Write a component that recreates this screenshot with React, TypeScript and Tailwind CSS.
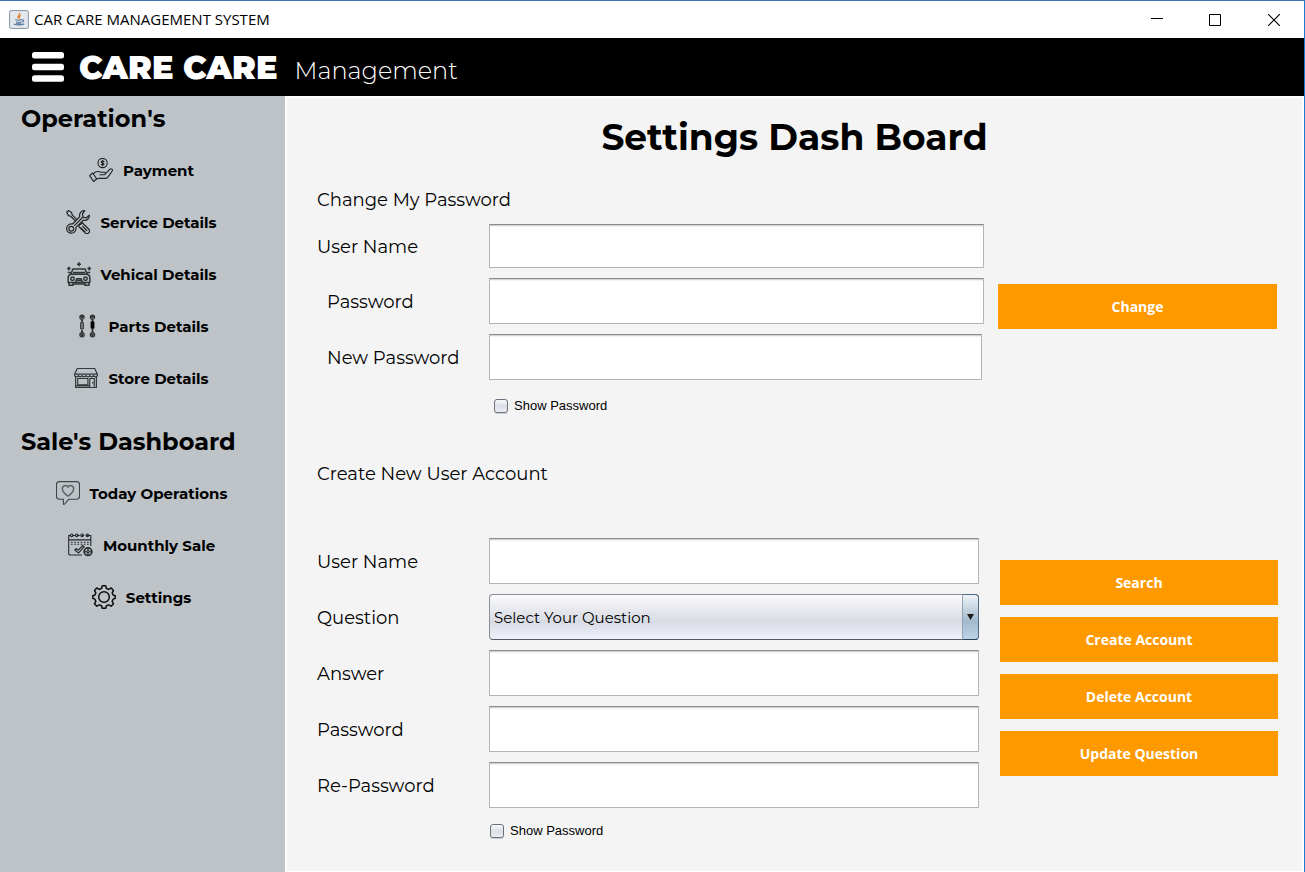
import React, { useState } from "react";

const PaymentIcon = () => (
  <svg width="24" height="24" viewBox="0 0 24 24" fill="none" stroke="#1f2326" strokeWidth="1.100" strokeLinejoin="round" strokeLinecap="round" aria-hidden="true">
    <circle cx="13.600" cy="5" r="4.600" />
    <path d="M15 3.600c-.5-.7-2.800-.7-2.800.4s2.800.8 2.800 2-2.300 1.200-2.900.3M13.600 2.400v5.300" />
    <path d="M.6 17.600l3-2.600 4 5.800-3 2.700z" />
    <path d="M4.300 15.700c2-2 4.300-2.600 6.200-1.900l1.700.5h3c1.800.1 1.700 2.400 0 2.500h-4.400M16.400 15.600l4.400-4.300c1.500-1.200 3.300.2 2.400 1.700l-4.500 6.400c-.6.7-1.300 1-2.200 1H9.200l-1.900.7" />
  </svg>
);

const ServiceIcon = () => (
  <svg width="24" height="24" viewBox="0 0 24 24" fill="none" stroke="#202427" strokeWidth="1.200" strokeLinejoin="round" strokeLinecap="round" aria-hidden="true">
    <path d="M.7 2.200L2.300.6l3.300 2 .6 2.200 4.600 4.800M9.400 10.900L4.700 6.300 2.500 5.600.7 2.200" />
    <path d="M13.300 14.700l1.300-.2 1-1 .2-1.200 7 6.900c2.200 2.500-1.300 6-3.700 3.700l-6.300-6.400zM16.600 16.200l4.200 4.300M15 17.800l4 4" />
    <path d="M18.700.7c-3.500-.4-5.800 2.800-4.900 5.900L6.500 14C2.700 13.300.2 16.500.7 19.400c1 4.500 8.200 5.600 9.300-.4l-.1-1.600 7.500-7.300c3.300.9 6.300-1.600 5.900-5L20.200 8l-3-.8-.8-3.100z" />
    <circle cx="5.300" cy="18.700" r="2.400" />
    <path d="M8.600 15.400l8.200-8.100" />
  </svg>
);

const VehicleIcon = () => (
  <svg width="24" height="24" viewBox="0 0 24 24" fill="none" stroke="#2f3437" strokeWidth="1.500" strokeLinejoin="round" aria-hidden="true">
    <path d="M12 .2v4M10 2.200h4M1.800 4.800v3.600M0 6.600h3.600M22.200 4.800v3.600M20.400 6.600H24" />
    <path d="M3.800 12.300L6 6.900h12l2.200 5.400zM6 10.500h12M.8 10.600h2.800M20.400 10.600h2.800" />
    <path d="M3.800 12.300C2 12.900 1.200 14 1.200 15.500v4.900h21.600v-4.900c0-1.500-.8-2.600-2.600-3.200" />
    <path d="M2 20.400v2.900h4v-2.900M18 20.400v2.900h4v-2.900M8.500 20.300l1.300-3.600h4.400l1.300 3.600M6 22h12M9 18.400h6" />
    <circle cx="5.500" cy="16.700" r="1.700" />
    <circle cx="18.500" cy="16.700" r="1.700" />
  </svg>
);

const PartsIcon = () => (
  <svg width="24" height="24" viewBox="0 0 24 24" fill="none" stroke="#2b2f32" strokeWidth="1.200" aria-hidden="true">
    <circle cx="7" cy="3.200" r="2.100" />
    <circle cx="7" cy="3.200" r=".8" />
    <circle cx="7" cy="20.800" r="2.100" />
    <circle cx="7" cy="20.800" r=".8" />
    <path d="M7 5.500v2.300M7 16.300v2.200" strokeWidth="2" />
    <path d="M5.600 8.500h2.800v6.500H5.600zM5 10h4M5 12h4M5 14h4" strokeWidth=".9" />
    <circle cx="17.500" cy="3.200" r="2.100" />
    <circle cx="17.500" cy="3.200" r=".8" />
    <circle cx="17.500" cy="20.800" r="2.100" />
    <circle cx="17.500" cy="20.800" r=".8" />
    <path d="M17.500 5.500v13" strokeWidth="1.800" />
    <path d="M17.500 7.500v7" stroke="#000" strokeWidth="3.800" />
  </svg>
);

const StoreIcon = () => (
  <svg width="24" height="24" viewBox="0 0 24 24" fill="none" stroke="#34393c" strokeWidth="1.200" strokeLinejoin="round" aria-hidden="true">
    <path d="M3.300 2.500h17.400l2.700 5.700H.6z" />
    <path d="M.6 8.200v1.200c.3 1.900 3.500 1.900 3.800 0 .4 1.900 3.400 1.900 3.800 0 .4 1.900 3.300 1.900 3.800 0 .5 1.900 3.400 1.900 3.800 0 .4 1.900 3.400 1.900 3.800 0 .3 1.900 3.500 1.900 3.800 0V8.200" />
    <path d="M1.600 10.800v10.700h20.800V10.800M3.700 12.500h10.200v6.400H3.700zM15.700 21.500v-9h4.600v9M1.600 19.900h14.100M18.700 16v1.500" />
  </svg>
);

const TodayIcon = () => (
  <svg width="24" height="24" viewBox="0 0 24 24" fill="none" stroke="#414649" strokeWidth="1.100" strokeLinejoin="round" aria-hidden="true">
    <path d="M3.500.6h17c2 0 3 1.200 3 3v11.700c0 2-1 3-3 3h-7.800l-4.200 4.800c-.6.600-1.100.4-1.100-.4v-4.400H3.500c-2 0-3-1.100-3-3V3.600c0-1.900 1-3 3-3z" />
    <path d="M12 15.200C8.500 12.700 6.300 10.600 6.300 7.800c0-3 4-4.500 5.700-1.600 1.700-2.900 5.700-1.400 5.700 1.600 0 2.800-2.200 4.900-5.700 7.400z" stroke="#5c6164" strokeWidth="1.500" />
  </svg>
);

const MonthIcon = () => (
  <svg width="25" height="24" viewBox="0 0 25 24" fill="none" stroke="#25292c" strokeWidth="1.100" aria-hidden="true">
    <path d="M14 22H2.300c-1 0-1.600-.6-1.600-1.600V2.500h2M4.500 2.500h2.700M9 2.500h2.800M13.600 2.500h2.700M18.200 2.500h4.600V13M.7 6.900h22.100" />
    <circle cx="3.700" cy="2.300" r="1.300" />
    <circle cx="8.800" cy="2.300" r="1.300" />
    <circle cx="14.100" cy="2.300" r="1.300" />
    <circle cx="19.400" cy="2.300" r="1.300" />
    <path d="M3 9.300h18M3 11.300h18" strokeDasharray="1.700 1.500" />
    <path d="M6.800 17l1.500-1.400 2 1.600 4.400-4.700 1.500 1.200-5.700 6.300z" />
    <circle cx="20" cy="18.700" r="3.800" strokeWidth="1.700" />
    <circle cx="20" cy="18.700" r="1.200" />
    <path d="M20 15v2.500M20 20v2.500M16.500 18.700h2.300M21.200 18.700h2.300" />
  </svg>
);

const SettingsIcon = () => (
  <svg width="24" height="24" viewBox="0 0 24 24" fill="none" stroke="#0c0d0e" strokeWidth="1.500" strokeLinejoin="round" aria-hidden="true">
    <path d="M10.300.8h3.400l.8 2.700 2.200.9 2.500-1.400 2.300 2.400-1.300 2.500.9 2.100 2.100.7v2.700l-2.100.8-.9 2.200 1.300 2.400-2.300 2.400-2.500-1.300-2.200.9-.8 2.400h-3.400l-.8-2.400-2.200-.9-2.500 1.300-2.300-2.400 1.300-2.400-.9-2.200-2.100-.8v-2.700l2.100-.7.9-2.100-1.300-2.500L4.800 3l2.500 1.400 2.200-.9z" />
    <circle cx="12" cy="12" r="5.300" />
  </svg>
);

const JavaIcon = () => (
  <svg width="20" height="19" viewBox="0 0 20 19" fill="none" aria-hidden="true">
    <rect x=".6" y=".6" width="18.800" height="17.800" rx="1.500" fill="#e4e8ec" stroke="#8496a9" />
    <path d="M10.700 2.800c1 2-3 3-1.600 5.500M12 5.500c-2 1-2.200 1.900-1.200 3" stroke="#e58235" strokeWidth="1.300" />
    <path d="M6.200 9.500c1.500.8 5.500.8 7 0M7 11.800c1.500.7 4 .7 5.500 0M13.300 9.800c2-.3 2 1.900-.5 2.300M4.600 14c3 1.400 8.500 1.300 10.700-.2M7 13.500c1.800.5 3.700.5 5.300 0" stroke="#587b9e" strokeWidth="1.100" />
  </svg>
);

const operations = [
  { label: "Payment", icon: <PaymentIcon /> },
  { label: "Service Details", icon: <ServiceIcon /> },
  { label: "Vehical Details", icon: <VehicleIcon /> },
  { label: "Parts Details", icon: <PartsIcon /> },
  { label: "Store Details", icon: <StoreIcon /> },
];

const sales = [
  { label: "Today Operations", icon: <TodayIcon /> },
  { label: "Mounthly Sale", icon: <MonthIcon /> },
  { label: "Settings", icon: <SettingsIcon /> },
];

function NavList({ items }: { items: { label: string; icon: React.ReactNode }[] }) {
  return (
    <ul>
      {items.map((item) => (
        <li key={item.label}>
          <button type="button" className="flex h-[52px] w-full items-center justify-center gap-2.5 pr-0.5 text-[15px] font-bold whitespace-nowrap">
            {item.icon}
            <span className="pt-0.5">{item.label}</span>
          </button>
        </li>
      ))}
    </ul>
  );
}

const labelClass = "w-[172px] shrink-0 pt-0.5 text-lg";
const inputClass =
  "border border-[#b4b4b4] border-t-[#8c8c8c] bg-white px-1.5 text-lg outline-none shadow-[inset_0_1px_0_#d4d4d4,inset_0_2px_0_#f2f2f2]";

type FieldProps = {
  id: string;
  label: string;
  type?: string;
  labelInset?: string;
  box?: string;
};

function Field({ id, label, type = "text", labelInset = "", box = "h-[46px]" }: FieldProps) {
  return (
    <div className="flex items-center">
      <label htmlFor={id} className={`${labelClass} ${labelInset}`}>
        {label}
      </label>
      <input id={id} type={type} className={`min-w-0 flex-1 ${inputClass} ${box}`} />
    </div>
  );
}

function ShowPassword({ checked, onChange }: { checked: boolean; onChange: (value: boolean) => void }) {
  return (
    <label className="flex items-center gap-1.5 font-['Liberation_Sans',sans-serif] text-[13px] leading-4">
      <input
        type="checkbox"
        checked={checked}
        onChange={(e) => onChange(e.target.checked)}
        className="size-3.5 appearance-none rounded-[3px] border border-[#6c727c] bg-linear-to-b from-[#fafafc] via-[#dcdfe6] to-[#eceef4] shadow-[0_1px_0_#c9cbd0] checked:bg-[#33628c] checked:bg-none"
      />
      Show Password
    </label>
  );
}

function ActionButton({ children }: { children: React.ReactNode }) {
  return (
    <button type="button" className="h-[45px] w-full bg-[#ff9900] font-['Open_Sans',sans-serif] text-sm font-bold text-white">
      {children}
    </button>
  );
}

export default function App() {
  const [showChange, setShowChange] = useState(false);
  const [showCreate, setShowCreate] = useState(false);

  return (
    <div className="flex min-h-screen flex-col border-t border-r border-t-[#3a78b5] border-r-[#1a7fd4] bg-white font-['Montserrat','Inter',sans-serif] text-black">
      <div className="flex h-[37px] items-center justify-between pl-[9px]">
        <div className="flex items-center gap-[5px]">
          <JavaIcon />
          <span className="font-['Segoe_UI','Open_Sans',sans-serif] text-[15px]">CAR CARE MANAGEMENT SYSTEM</span>
        </div>
        <div className="flex h-full">
          <button type="button" aria-label="Minimize" className="flex w-[58px] items-center justify-center">
            <svg width="12" height="12" viewBox="0 0 12 12" aria-hidden="true"><path d="M0 4.500h12" stroke="#000" /></svg>
          </button>
          <button type="button" aria-label="Maximize" className="flex w-[58px] items-center justify-center">
            <svg width="12" height="12" viewBox="0 0 12 12" aria-hidden="true"><path d="M.5.5h11v11H.5z" fill="none" stroke="#000" /></svg>
          </button>
          <button type="button" aria-label="Close" className="flex w-[60px] items-center justify-center">
            <svg width="12" height="12" viewBox="0 0 12 12" aria-hidden="true"><path d="M0 0l12 12M12 0L0 12" stroke="#000" strokeWidth="1.100" /></svg>
          </button>
        </div>
      </div>

      <header className="flex h-[58px] items-center bg-black pl-8 text-white">
        <button type="button" aria-label="Menu" className="mr-[15px]">
          <svg width="32" height="30" viewBox="0 0 32 30" fill="#fff" aria-hidden="true">
            <rect width="32" height="6.500" rx="2.500" />
            <rect y="11.700" width="32" height="6.500" rx="2.500" />
            <rect y="23.300" width="32" height="6.500" rx="2.500" />
          </svg>
        </button>
        <div className="flex items-baseline gap-[17px] pt-0.5">
          <span className="text-[32px] font-black">CARE CARE</span>
          <span className="text-2xl font-light">Management</span>
        </div>
      </header>

      <div className="flex flex-1">
        <nav className="w-[285px] shrink-0 bg-[#bdc3c7]">
          <h2 className="flex h-12 items-center pb-0.5 pl-[21px] text-2xl font-bold">Operation's</h2>
          <NavList items={operations} />
          <h2 className="mt-[15px] flex h-12 items-center pb-0.5 pl-[21px] text-2xl font-bold">Sale's Dashboard</h2>
          <NavList items={sales} />
        </nav>

        <main className="min-w-0 flex-1 border-2 border-b border-white bg-[#f4f4f4]">
          <h1 className="flex h-[78px] items-center justify-center text-4xl font-bold">Settings Dash Board</h1>

          <form className="pr-[25px] pl-[30px]">
            <h2 className="flex h-12 items-center text-lg">Change My Password</h2>
            <div className="flex gap-3.5">
              <div className="flex flex-1 flex-col gap-2.5">
                <Field id="change-user" label="User Name" box="h-11" />
                <Field id="change-password" label="Password" labelInset="pl-2.5" type={showChange ? "text" : "password"} />
                <Field id="change-new" label="New Password" labelInset="pl-2.5" box="mr-0.5 h-[46px]" type={showChange ? "text" : "password"} />
              </div>
              <div className="w-[279px] pt-[60px]">
                <ActionButton>Change</ActionButton>
              </div>
            </div>
            <div className="flex h-[52px] items-center pl-[177px]">
              <ShowPassword checked={showChange} onChange={setShowChange} />
            </div>
          </form>

          <form className="pr-6 pl-[30px]">
            <h2 className="mb-[22px] flex h-[84px] items-center text-lg">Create New User Account</h2>
            <div className="flex gap-[21px]">
              <div className="flex flex-1 flex-col gap-2.5">
                <Field id="create-user" label="User Name" />
                <div className="flex items-center">
                  <label htmlFor="create-question" className={labelClass}>Question</label>
                  <div className="relative flex-1">
                    <select
                      id="create-question"
                      className="block h-[46px] w-full appearance-none rounded border border-[#8a8e99] border-b-[#545965] bg-linear-to-b from-[#fbfbfd] via-[#d8dbe3] via-60% to-[#eef1fa] pt-0.5 pr-5 pl-1 text-[15px] outline-none"
                    >
                      <option>Select Your Question</option>
                    </select>
                    <span className="pointer-events-none absolute inset-y-0 right-0 flex w-[17px] items-center justify-center rounded-r border border-[#4f6a84] border-b-[#2d4054] border-l-[#8fa3b6] bg-linear-to-b from-[#eef4f8] via-[#a3b9cc] via-60% to-[#bcd3e8]">
                      <svg width="7" height="6" viewBox="0 0 7 6" aria-hidden="true"><path d="M0 0h7L3.500 6z" fill="#1c1c1c" /></svg>
                    </span>
                  </div>
                </div>
                <Field id="create-answer" label="Answer" />
                <Field id="create-password" label="Password" type={showCreate ? "text" : "password"} />
                <Field id="create-repassword" label="Re-Password" type={showCreate ? "text" : "password"} />
              </div>
              <div className="flex w-[278px] flex-col gap-3 pt-[22px]">
                <ActionButton>Search</ActionButton>
                <ActionButton>Create Account</ActionButton>
                <ActionButton>Delete Account</ActionButton>
                <ActionButton>Update Question</ActionButton>
              </div>
            </div>
            <div className="flex h-[46px] items-center pl-[173px]">
              <ShowPassword checked={showCreate} onChange={setShowCreate} />
            </div>
          </form>
        </main>
      </div>
    </div>
  );
}
